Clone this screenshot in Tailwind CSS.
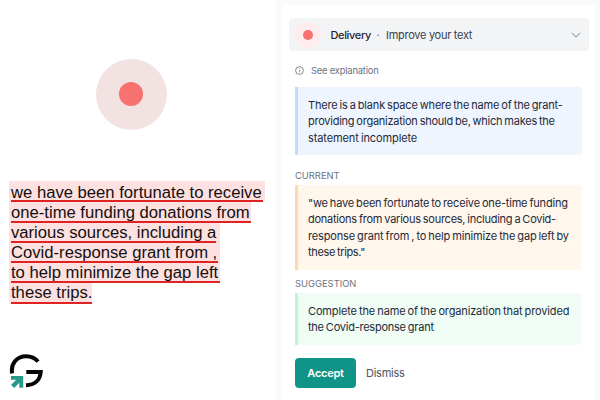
<!DOCTYPE html>
<html lang="en">
<head>
<meta charset="utf-8">
<title>Delivery suggestion</title>
<script src="https://cdn.jsdelivr.net/npm/@tailwindcss/browser@4"></script>
</head>
<body class="w-[600px] h-[400px] overflow-hidden bg-white flex font-['Inter','Liberation_Sans',sans-serif]">
<section class="w-[276px] h-[400px] shrink-0 flex flex-col items-start">
  <div class="mt-[59px] ml-24 size-[71px] rounded-full bg-[#f2e2e2] pt-[23px] pl-[23px]">
    <div class="size-6 rounded-full bg-[#f87171]"></div>
  </div>
  <div class="mt-[51px] ml-[9px] h-[123px] flex flex-col items-start font-['Liberation_Sans',Arial,sans-serif] text-[16.65px] leading-[24px] text-[#141010] whitespace-nowrap">
    <div class="w-[256px] h-5 bg-[#fde0e0] pl-[2px]"><div class="relative w-[252px] h-[21px] border-b-2 border-[#e02424]">we have been fortunate to receive</div></div>
    <div class="w-[242px] h-5 bg-[#fde0e0] pl-[2px]"><div class="relative w-[240px] h-[22px] border-b-2 border-[#e02424]">one-time funding donations from</div></div>
    <div class="w-[211px] h-5 bg-[#fde0e0] pl-[2px]"><div class="relative w-[205px] h-[22px] border-b-2 border-[#e02424]">various sources, including a</div></div>
    <div class="w-[211px] h-5 bg-[#fde0e0] pl-[2px]"><div class="relative w-[207px] h-[22px] border-b-2 border-[#e02424]">Covid-response grant from ,</div></div>
    <div class="w-[211px] h-5 bg-[#fde0e0] pl-[2px]"><div class="relative w-[209px] h-[22px] border-b-2 border-[#e02424]">to help minimize the gap left</div></div>
    <div class="w-[83px] h-[23px] bg-[#fde0e0] pl-[2px]"><div class="relative w-[81px] h-[23px] border-b-2 border-[#e02424]">these trips.</div></div>
  </div>
  <svg class="mt-[49px] ml-[9px] w-[36px] h-[36px]" viewBox="9 353 36 36" fill="none">
    <path d="M12.1 373.4C10.6 363.5 17 356.2 26 356.2C31.5 356.2 35.6 358.5 38 361.6" stroke="#050505" stroke-width="4"/>
    <path d="M26.3 372H40.7C40.1 380 34.6 385.2 26 385.2" stroke="#050505" stroke-width="4"/>
    <path d="M11 376H23.2V387.8H19.3V382.8L14.2 388L11 384.9L16.2 379.8H11Z" fill="#27998a"/>
  </svg>
</section>
<main class="w-[324px] h-[400px] bg-[#f8fafb] pl-[6px] pt-[5px]">
  <div class="w-[313px] h-[395px] bg-white pt-[13px] pl-[6.5px] text-[11px] leading-[16.4px] text-[#1e2939] whitespace-nowrap">
    <header class="w-[300px] h-[33px] rounded bg-[#f3f4f6] flex items-center pl-[6.5px]">
      <div class="size-[26px] rounded-full bg-[#ffecec] p-2"><div class="size-[10px] rounded-full bg-[#f87171]"></div></div>
      <span class="ml-[9.5px] pt-px w-[46px] font-medium tracking-[-0.35px] text-[#1f2233]">Delivery</span>
      <span class="w-[9.5px] pt-px text-[#6b7280]">·</span>
      <span class="pt-px text-[#374151] tracking-[-0.28px]">Improve your text</span>
      <svg class="ml-auto mr-[8px] w-[10px] h-[6px]" viewBox="0 0 10 6" fill="none" stroke="#9ca3af" stroke-width="1.1"><path d="M.8 .8L5 5L9.2 .8"/></svg>
    </header>
    <div class="pl-[6.5px]">
      <div class="mt-3 h-[15px] flex items-center text-[9.4px] leading-[15px] text-[#6b7280]">
        <svg class="size-[9px] mr-[7px]" viewBox="0 0 9 9" fill="none" stroke="#7d8491"><circle cx="4.5" cy="4.5" r="3.9"/><path d="M4 4.2H4.7V6.5M4.5 2.4V3.1" stroke-width=".8"/></svg>
        <span class="tracking-[-0.2px]">See explanation</span>
      </div>
      <div class="mt-[9px] w-[287px] h-[68px] bg-[#eff5ff] border-l-[3px] border-[#bfdbfe] rounded-r pl-[10px] pt-[10px] [word-spacing:-0.8px]">
        <div class="tracking-[-0.19px]">There is a blank space where the name of the grant-</div>
        <div class="tracking-[-0.25px]">providing organization should be, which makes the</div>
        <div class="tracking-[-0.11px]">statement incomplete</div>
      </div>
      <div class="mt-[13px] h-[17px] text-[9.4px] leading-[15px] text-[#6b7280]">CURRENT</div>
      <div class="w-[287px] h-[85px] bg-[#fff6ec] border-l-[3px] border-[#fed7aa] rounded-r pl-[10px] pt-[10px] [word-spacing:-0.8px]">
        <div class="tracking-[-0.19px]">"we have been fortunate to receive one-time funding</div>
        <div class="tracking-[-0.25px]">donations from various sources, including a Covid-</div>
        <div class="tracking-[-0.16px]">response grant from , to help minimize the gap left by</div>
        <div class="tracking-[-0.35px]">these trips."</div>
      </div>
      <div class="mt-[6px] h-[17px] text-[9.4px] leading-[15px] text-[#6b7280]">SUGGESTION</div>
      <div class="w-[287px] h-[52px] bg-[#f0fdf5] border-l-[3px] border-[#bbf7d0] rounded-r pl-[10px] pt-[10px] [word-spacing:-0.8px]">
        <div class="tracking-[-0.14px]">Complete the name of the organization that provided</div>
        <div class="tracking-[-0.24px]">the Covid-response grant</div>
      </div>
      <div class="mt-[13px] flex items-center">
        <button class="w-[61px] h-[30px] rounded bg-[#119488] text-white font-semibold tracking-[-0.25px]">Accept</button>
        <button class="ml-[10px] text-[#4b5563] tracking-[-0.25px]">Dismiss</button>
      </div>
    </div>
  </div>
</main>
</body>
</html>
